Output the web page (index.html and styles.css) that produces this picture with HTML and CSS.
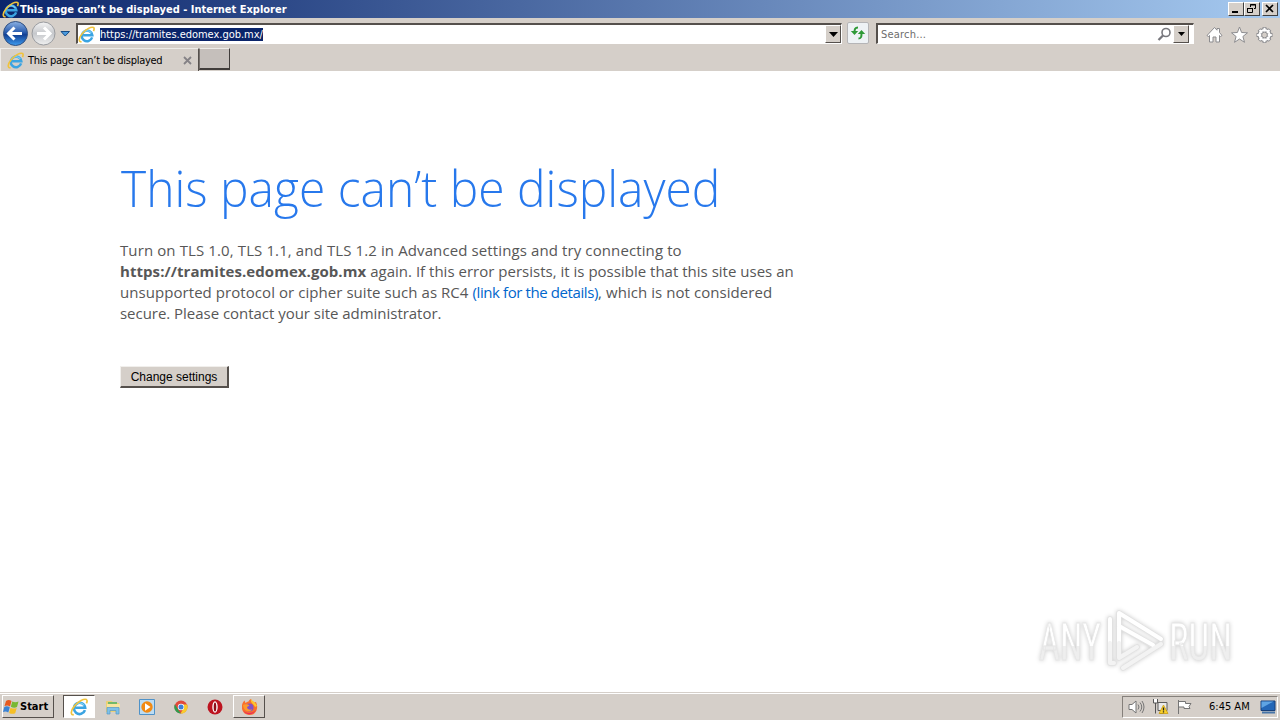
FILE: index.html
```html
<!DOCTYPE html>
<html lang="en">
<head>
    <meta charset="UTF-8">
    <meta name="viewport" content="width=device-width, initial-scale=1.0">
    <title>This page can’t be displayed</title>
    <link rel="stylesheet" href="styles.css">
</head>
<body>
    <!-- shared icons -->
    <svg class="defs" width="0" height="0">
        <defs>
            <linearGradient id="blueBall" x1="0" y1="0" x2="0" y2="1">
                <stop offset="0" stop-color="#8cb2e4"/>
                <stop offset=".45" stop-color="#2a5cae"/>
                <stop offset=".55" stop-color="#123f93"/>
                <stop offset="1" stop-color="#3f9df0"/>
            </linearGradient>
            <linearGradient id="greyBall" x1="0" y1="0" x2="0" y2="1">
                <stop offset="0" stop-color="#f4f4f4"/>
                <stop offset=".5" stop-color="#c6c8cc"/>
                <stop offset="1" stop-color="#f0f0f0"/>
            </linearGradient>
            <linearGradient id="markFill" x1="0" y1="0" x2="0" y2="1">
                <stop offset=".55" stop-color="#fff"/>
                <stop offset=".55" stop-color="#eeeeee"/>
            </linearGradient>
            <symbol id="ie" viewBox="0 0 16 16">
                <path d="M13.300 10.800A5 5 0 1 1 13.500 8.700H4.800" fill="none" stroke="#3ba4e2" stroke-width="2.300"/>
                <path d="M4.200 6.800A5 5 0 0 1 12.600 6.500" fill="none" stroke="#7fd0f5" stroke-width="1"/>
                <path d="M3.400 14.800C.4 15.400.3 11.500 3.900 7.200S12.600.3 14.600 1.400c1 .7.600 2.100 0 3.400" fill="none" stroke="#f0c33c" stroke-width="1.500"/>
            </symbol>
        </defs>
    </svg>

    <div class="title-bar">
        <svg class="title-icon" width="17" height="17"><use href="#ie"/></svg>
        <span class="title-text">This page can’t be displayed - Internet Explorer</span>
        <div class="window-buttons">
            <span class="win-btn"><svg width="14" height="12"><path d="M3 9h6" stroke="#000" stroke-width="2"/></svg></span>
            <span class="win-btn"><svg width="14" height="12" fill="none" stroke="#000"><path d="M5.500 4V1.500h5v4H9M5 2h6M2.500 5.500h5v4h-5zM2 5.500h6"/></svg></span>
            <span class="win-btn close"><svg width="14" height="12"><path d="M3 2l7 7M10 2L3 9" stroke="#000" stroke-width="1.700"/></svg></span>
        </div>
    </div>

    <div class="toolbar">
        <svg class="nav" width="74" height="30" viewBox="0 0 74 30">
            <circle cx="15.500" cy="15.500" r="12" fill="url(#blueBall)" stroke="#315081"/>
            <path d="M9 15.500h13M14.500 9.500l-6 6 6 6" fill="none" stroke="#fff" stroke-width="3"/>
            <circle cx="43.500" cy="15.500" r="11.500" fill="url(#greyBall)" stroke="#999b9f"/>
            <path d="M37 15.500h12M44 9.500l6 6-6 6" fill="none" stroke="#fff" stroke-width="3"/>
            <path d="M61 13.500h8.500L65.200 18z" fill="#4a9ade" stroke="#174c85"/>
        </svg>
        <div class="address">
            <svg width="17" height="17"><use href="#ie"/></svg>
            <span class="url">https://tramites.edomex.gob.mx/</span>
            <span class="drop"><svg width="9" height="5"><path d="M0 0h9L4.500 5z"/></svg></span>
        </div>
        <div class="refresh">
            <svg width="16" height="16" fill="none" stroke="#2f9a38" stroke-width="2">
                <path d="M8 2.500C5 2.500 4.500 4 4.500 8M8.500 13.500c3 0 3-2 3-6"/>
                <path d="M.8 6h7.400l-3.700 4zM7.800 9h7.400l-3.700-4z" fill="#2f9a38" stroke="none"/>
            </svg>
        </div>
        <div class="search">
            <span class="placeholder">Search...</span>
            <svg width="15" height="15" fill="none" stroke="#77777d"><circle cx="9" cy="5.500" r="4" stroke-width="1.600"/><path d="M6 8.500L1.500 13" stroke-width="2.300"/></svg>
            <span class="drop"><svg width="7" height="4"><path d="M0 0h7L3.500 4z"/></svg></span>
        </div>
        <div class="tools">
            <svg width="17" height="18" fill="#fff" stroke="#8c8c8f"><path d="M1 9.500L8.500 1.500l2.500 2.700V2.500h2.500v4L16 9.500l-1.500 1-1-1v6.500H10v-5H7v5H3.500V9.500l-1 1z"/></svg>
            <svg width="17" height="18" fill="#fff" stroke="#8c8c8f"><path d="M8.500 1l2.100 5.500 5.900.3-4.600 3.700 1.600 5.800-5-3.300-5 3.300 1.600-5.800L.5 6.800l5.900-.3z"/></svg>
            <svg width="17" height="18" viewBox="-8.500 -9 17 18">
                <g fill="none" stroke="#8c8c8f"><circle r="5.300" stroke-width="3.600"/><path d="M0-8V8M-8 0H8M-5.500-5.500l11 11M5.500-5.500l-11 11" stroke-width="3.800"/></g>
                <g fill="none" stroke="#fff"><path d="M0-7.300V7.300M-7.300 0H7.300M-5-5l10 10M5-5L-5 5" stroke-width="2"/><circle r="5" stroke-width="2.200"/></g>
                <circle r="2.900" fill="#d5cfc9" stroke="#8c8c8f"/>
            </svg>
        </div>
    </div>

    <div class="tabs">
        <div class="tab">
            <svg width="17" height="17"><use href="#ie"/></svg>
            <span class="tab-text">This page can’t be displayed</span>
            <svg class="tab-close" width="9" height="9"><path d="M1 1l7 7M8 1L1 8" stroke="#858286" stroke-width="1.800"/></svg>
        </div>
        <div class="new-tab"></div>
    </div>

    <div class="page">
        <h1>This page can’t be displayed</h1>
        <p class="message">
            <span class="line wide">Turn on TLS 1.0, TLS 1.1, and TLS 1.2 in Advanced settings and try connecting to</span>
            <span class="line"><b>https://tramites.edomex.gob.mx</b> <span class="again">again. If this error persists, it is possible that this site uses an</span></span>
            <span class="line">unsupported protocol or cipher suite such as RC4 <a href="#">(link for the details)</a>, which is not considered</span>
            <span class="line tight">secure. Please contact your site administrator.</span>
        </p>
        <button class="settings-btn">Change settings</button>

        <svg class="watermark" width="230" height="72" viewBox="0 0 230 72">
            <g class="mark-text" fill="url(#markFill)">
                <text x="3" y="56" textLength="62" lengthAdjust="spacingAndGlyphs">ANY</text>
                <text x="133" y="56" textLength="63" lengthAdjust="spacingAndGlyphs">RUN</text>
            </g>
            <g fill="none" stroke-linejoin="round" stroke-linecap="round">
                <g stroke="#e2e2e2" stroke-width="5.500"><path d="M83 54V9l42 26M74 15v44h4M83 22l36 21M83 54l18-11M87 64l38-24"/></g>
                <g stroke="#fff" stroke-width="4"><path d="M83 38V9l42 26M74 15v23M83 22l34 19"/></g>
                <path d="M83 39v15l18-11M74 39v20h4M87 64l38-24" stroke="#f3f3f3" stroke-width="4"/>
            </g>
        </svg>
    </div>

    <div class="taskbar">
        <div class="start">
            <svg width="17" height="16" viewBox="0 0 17 16">
                <path d="M3 2c2-1.500 4-1 5.500 0L7 7.500C5 6 3.500 6.200 1.500 7z" fill="#e65a20"/>
                <path d="M9.300 2.500c2 1 4 1 6.200 0L14 8c-2 1-4 .8-6.200-.2z" fill="#79b833"/>
                <path d="M1.300 8c2-1 3.700-.8 5.500.3L5.300 13.500c-2-1.200-3.500-1.200-5.300-.4z" fill="#3a83d4"/>
                <path d="M7.500 8.700c2 1 4 1.200 6.200.2l-1.500 5.300c-2 1-4 .8-6.100-.3z" fill="#f6bf25"/>
            </svg>
            <span>Start</span>
        </div>
        <div class="apps">
            <div class="app active"><svg width="18" height="18"><use href="#ie"/></svg></div>
            <div class="app">
                <svg width="16" height="16"><path d="M1 2h6l1 2h6v9H1z" fill="#ecd176"/><path d="M3 3h9v3H3z" fill="#73b969"/><path d="M2 5h13v4H2z" fill="#f8e5a0"/><path d="M2 15V8.500h12V15h-3v-3.500H5V15z" fill="#7fc1e8" stroke="#5598c7" stroke-width=".7"/></svg>
            </div>
            <div class="app">
                <svg width="16" height="16"><path d="M.5.5h15v15H.5z" fill="#bcdcf3" stroke="#4f92c8"/><circle cx="8" cy="8" r="5.700" fill="#f28a13"/><path d="M6 4.300v7.400L11.500 8z" fill="#fff"/></svg>
            </div>
            <div class="app">
                <svg width="14" height="14"><circle cx="7" cy="7" r="6.500" fill="#e14a3c"/><path d="M.9 4.200L5 11l2 2.500A6.500 6.500 0 0 1 .9 4.200z" fill="#2f9c4e"/><path d="M13.100 4.600A6.500 6.500 0 0 1 6.500 13.500L10 7.500 8.500 4.600z" fill="#f8cc2c"/><circle cx="7" cy="7" r="3.200" fill="#fff"/><circle cx="7" cy="7" r="2.500" fill="#3d7fd8"/></svg>
            </div>
            <div class="app">
                <svg width="16" height="16"><circle cx="8" cy="8" r="7.500" fill="#bd1420"/><ellipse cx="8" cy="8" rx="2.700" ry="5.800" fill="#fff"/><ellipse cx="8" cy="8" rx="1.300" ry="4.600" fill="#8f0e18"/></svg>
            </div>
            <div class="app raised">
                <svg width="17" height="16"><path d="M1 6C1.500 3.500 3 2 3.500 1.500L4.500 4c1-1 2-1.500 3-1.500C8 1 9.500.3 10 0c.5 2 2 2.500 3.500 3.500L15 3c1.500 3 1.500 6 .5 8.500A7.700 7.700 0 0 1 1 10z" fill="#f9702c"/><path d="M10 0c.5 2 5 3 6 7l-2 1c-1-3-5-4-4-8z" fill="#fdc52e"/><circle cx="8.500" cy="8.500" r="4" fill="#8252c8"/><path d="M2 6c2-1 5-1 6.500.5L6 8c0 2 2 3 5 2.500-1.500 3-8 3-9-4.500z" fill="#fb9b2b"/><path d="M2 11c3 4 9 4 13 0-3 5.500-10 6-13 0z" fill="#e92c5d"/></svg>
            </div>
        </div>
        <div class="tray">
            <svg width="17" height="16" fill="none" stroke="#757575"><path d="M1 5.500h3L8 2v12L4 10.500H1z" fill="#fff"/><path d="M10 5.500q2 2.500 0 5M12 3.500q3.500 4.500 0 9M14 2q4 6 0 12"/></svg>
            <svg width="17" height="17"><path d="M1.500 1v4h4V1M3.500 5v10.500" fill="#fff" stroke="#555"/><path d="M6 4.500h9v8H6z" fill="#e9e9e9" stroke="#5c5c5c"/><path d="M8 15.500h4" stroke="#5c5c5c"/><path d="M11.500 7l4.500 8.500H7z" fill="#fad12b" stroke="#c79807" stroke-width=".7"/><path d="M11.500 9.500v3M11.500 13.300v1.200" stroke="#222" stroke-width="1.300"/></svg>
            <svg width="17" height="16" fill="#fff" stroke="#757575"><path d="M2.500 15V1M2.500 2.500h7v2h5.500l-2 3 1 2H8v-1.500H2.500z"/></svg>
            <span class="clock">6:45 AM</span>
            <svg class="desktop" width="16" height="14"><path d="M1 1h14v9.500H1z" fill="#2467b7" stroke="#173f79"/><path d="M1.500 1.500h12L1.500 8z" fill="#5fa4e3"/><path d="M2 12.500h13" stroke="#4775a8" stroke-width="2"/></svg>
        </div>
    </div>
</body>
</html>
```
FILE: styles.css
```css
* {
    margin: 0;
    padding: 0;
    box-sizing: border-box;
}

body {
    width: 1280px;
    height: 720px;
    display: flex;
    flex-direction: column;
    overflow: hidden;
    background: #d5cfc9;
    color: #000;
    font-family: 'DejaVu Sans Condensed', 'DejaVu Sans', sans-serif;
    font-stretch: condensed;
    font-size: 11px;
    white-space: nowrap;
}

svg {
    display: block;
    flex-shrink: 0;
}

.defs {
    position: absolute;
}

.title-bar {
    height: 18px;
    display: flex;
    align-items: center;
    padding: 0 2px;
    background: linear-gradient(90deg, #0b256b 0%, #a6caf0 100%);
}

.title-text {
    flex: 1;
    margin-left: 1px;
    color: white;
    font-weight: bold;
}

.window-buttons {
    display: flex;
}

.win-btn {
    width: 16px;
    height: 14px;
    background: #d5cfc9;
    border: 1px solid;
    border-color: #fff #404040 #404040 #fff;
}

.win-btn.close {
    margin-left: 2px;
}

.toolbar {
    height: 30px;
    display: flex;
}

.nav {
    margin-right: 2px;
}

.address,
.search {
    height: 21px;
    margin-top: 5px;
    display: flex;
    align-items: center;
    background: white;
    border: 1px solid;
    border-color: #55504c #fff #fff #55504c;
    border-top-width: 2px;
    border-left-width: 2px;
}

.address {
    width: 766px;
}

.url {
    margin-left: 5px;
    background: #0a246a;
    color: white;
    line-height: 13px;
    letter-spacing: -0.03px;
}

.drop {
    width: 16px;
    height: 18px;
    margin-left: auto;
    display: flex;
    align-items: center;
    justify-content: center;
    background: #d5cfc9;
    border: 1px solid;
    border-color: #fff #55504c #55504c #fff;
}

.refresh {
    width: 22px;
    height: 22px;
    margin: 4px 7px 0 5px;
    padding: 2px;
    background: #eef2f5;
    border: 1px solid #b5b5b7;
    border-radius: 2px;
}

.search {
    width: 318px;
    padding: 0 4px 0 3px;
}

.placeholder {
    flex: 1;
    color: #6d6d6d;
    letter-spacing: 0.2px;
}

.search .drop {
    margin-left: 1px;
}

.tools {
    display: flex;
    gap: 8px;
    margin: 8px 0 0 12px;
}

.tabs {
    height: 23px;
    display: flex;
}

.tab {
    width: 199px;
    display: flex;
    align-items: center;
    padding-left: 6px;
    border-top: 1px solid #eeece9;
    border-left: 1px solid #eeece9;
    border-right: 1px solid #55504c;
}

.tab-text {
    margin-left: 4px;
    letter-spacing: -0.28px;
}

.tab-close {
    margin: 0 6px 0 auto;
}

.new-tab {
    width: 31px;
    height: 22px;
    background: #c5bfbb;
    border: 1px solid;
    border-color: #eeece9 #403c3a #403c3a #77716d;
    border-bottom-width: 2px;
}

.page {
    flex: 1;
    position: relative;
    padding: 86px 120px 0;
    background: white;
    font-family: 'Open Sans', sans-serif;
    font-stretch: normal;
}

h1 {
    width: max-content;
    height: 62px;
    margin-left: 1px;
    line-height: 62px;
    font-size: 50px;
    font-weight: 300;
    color: #2778ec;
    transform: scaleX(0.959);
    transform-origin: left;
}

.message {
    margin-top: 21px;
    font-size: 15px;
    line-height: 21px;
    color: #575757;
}

.line {
    display: block;
    width: max-content;
    letter-spacing: 0.06px;
}

.line.wide {
    letter-spacing: 0.11px;
}

.line.tight {
    letter-spacing: -0.03px;
}

.again {
    letter-spacing: 0.01px;
}

.message a {
    color: #0066cc;
    text-decoration: none;
    letter-spacing: -0.4px;
}

.settings-btn {
    display: block;
    width: 109px;
    height: 22px;
    margin-top: 42px;
    background: #d5cfc9;
    border: 1px solid;
    border-color: #f1efec #55504c #55504c #f1efec;
    border-bottom-width: 2px;
    border-right-width: 2px;
    font-family: 'Liberation Sans', Arial, sans-serif;
    font-size: 12px;
}

/* logo laid over the page */
.watermark {
    position: absolute;
    left: 1036px;
    top: 533px;
    overflow: visible;
    filter: drop-shadow(0 0 2px #ccc);
}

.mark-text {
    font-family: Roboto, sans-serif;
    font-size: 52px;
    font-stretch: 75%;
    stroke: #e6e6e6;
    stroke-width: 0.8px;
}

.taskbar {
    height: 28px;
    display: flex;
    align-items: center;
    padding: 0 2px;
    border-top: 1px solid #d5cfc9;
    box-shadow: inset 0 1px #fff;
}

.start {
    width: 52px;
    height: 23px;
    display: flex;
    align-items: center;
    font-weight: bold;
    border: 1px solid;
    border-color: #fff #55504c #55504c #fff;
}

.apps {
    display: flex;
    margin-left: 9px;
    gap: 2px;
}

.app {
    width: 32px;
    height: 23px;
    display: flex;
    align-items: center;
    justify-content: center;
}

.app.active {
    background: white;
    border: 1px solid;
    border-color: #55504c #fff #fff #55504c;
}

.app.raised {
    border: 1px solid;
    border-color: #fff #55504c #55504c #fff;
}

.tray {
    width: 156px;
    height: 22px;
    margin-left: auto;
    display: flex;
    align-items: center;
    gap: 7px;
    padding-left: 5px;
    border: 1px solid;
    border-color: #85807b #fff #fff #85807b;
}

.clock {
    margin-left: 9px;
}

.desktop {
    margin-left: 3px;
}
```
